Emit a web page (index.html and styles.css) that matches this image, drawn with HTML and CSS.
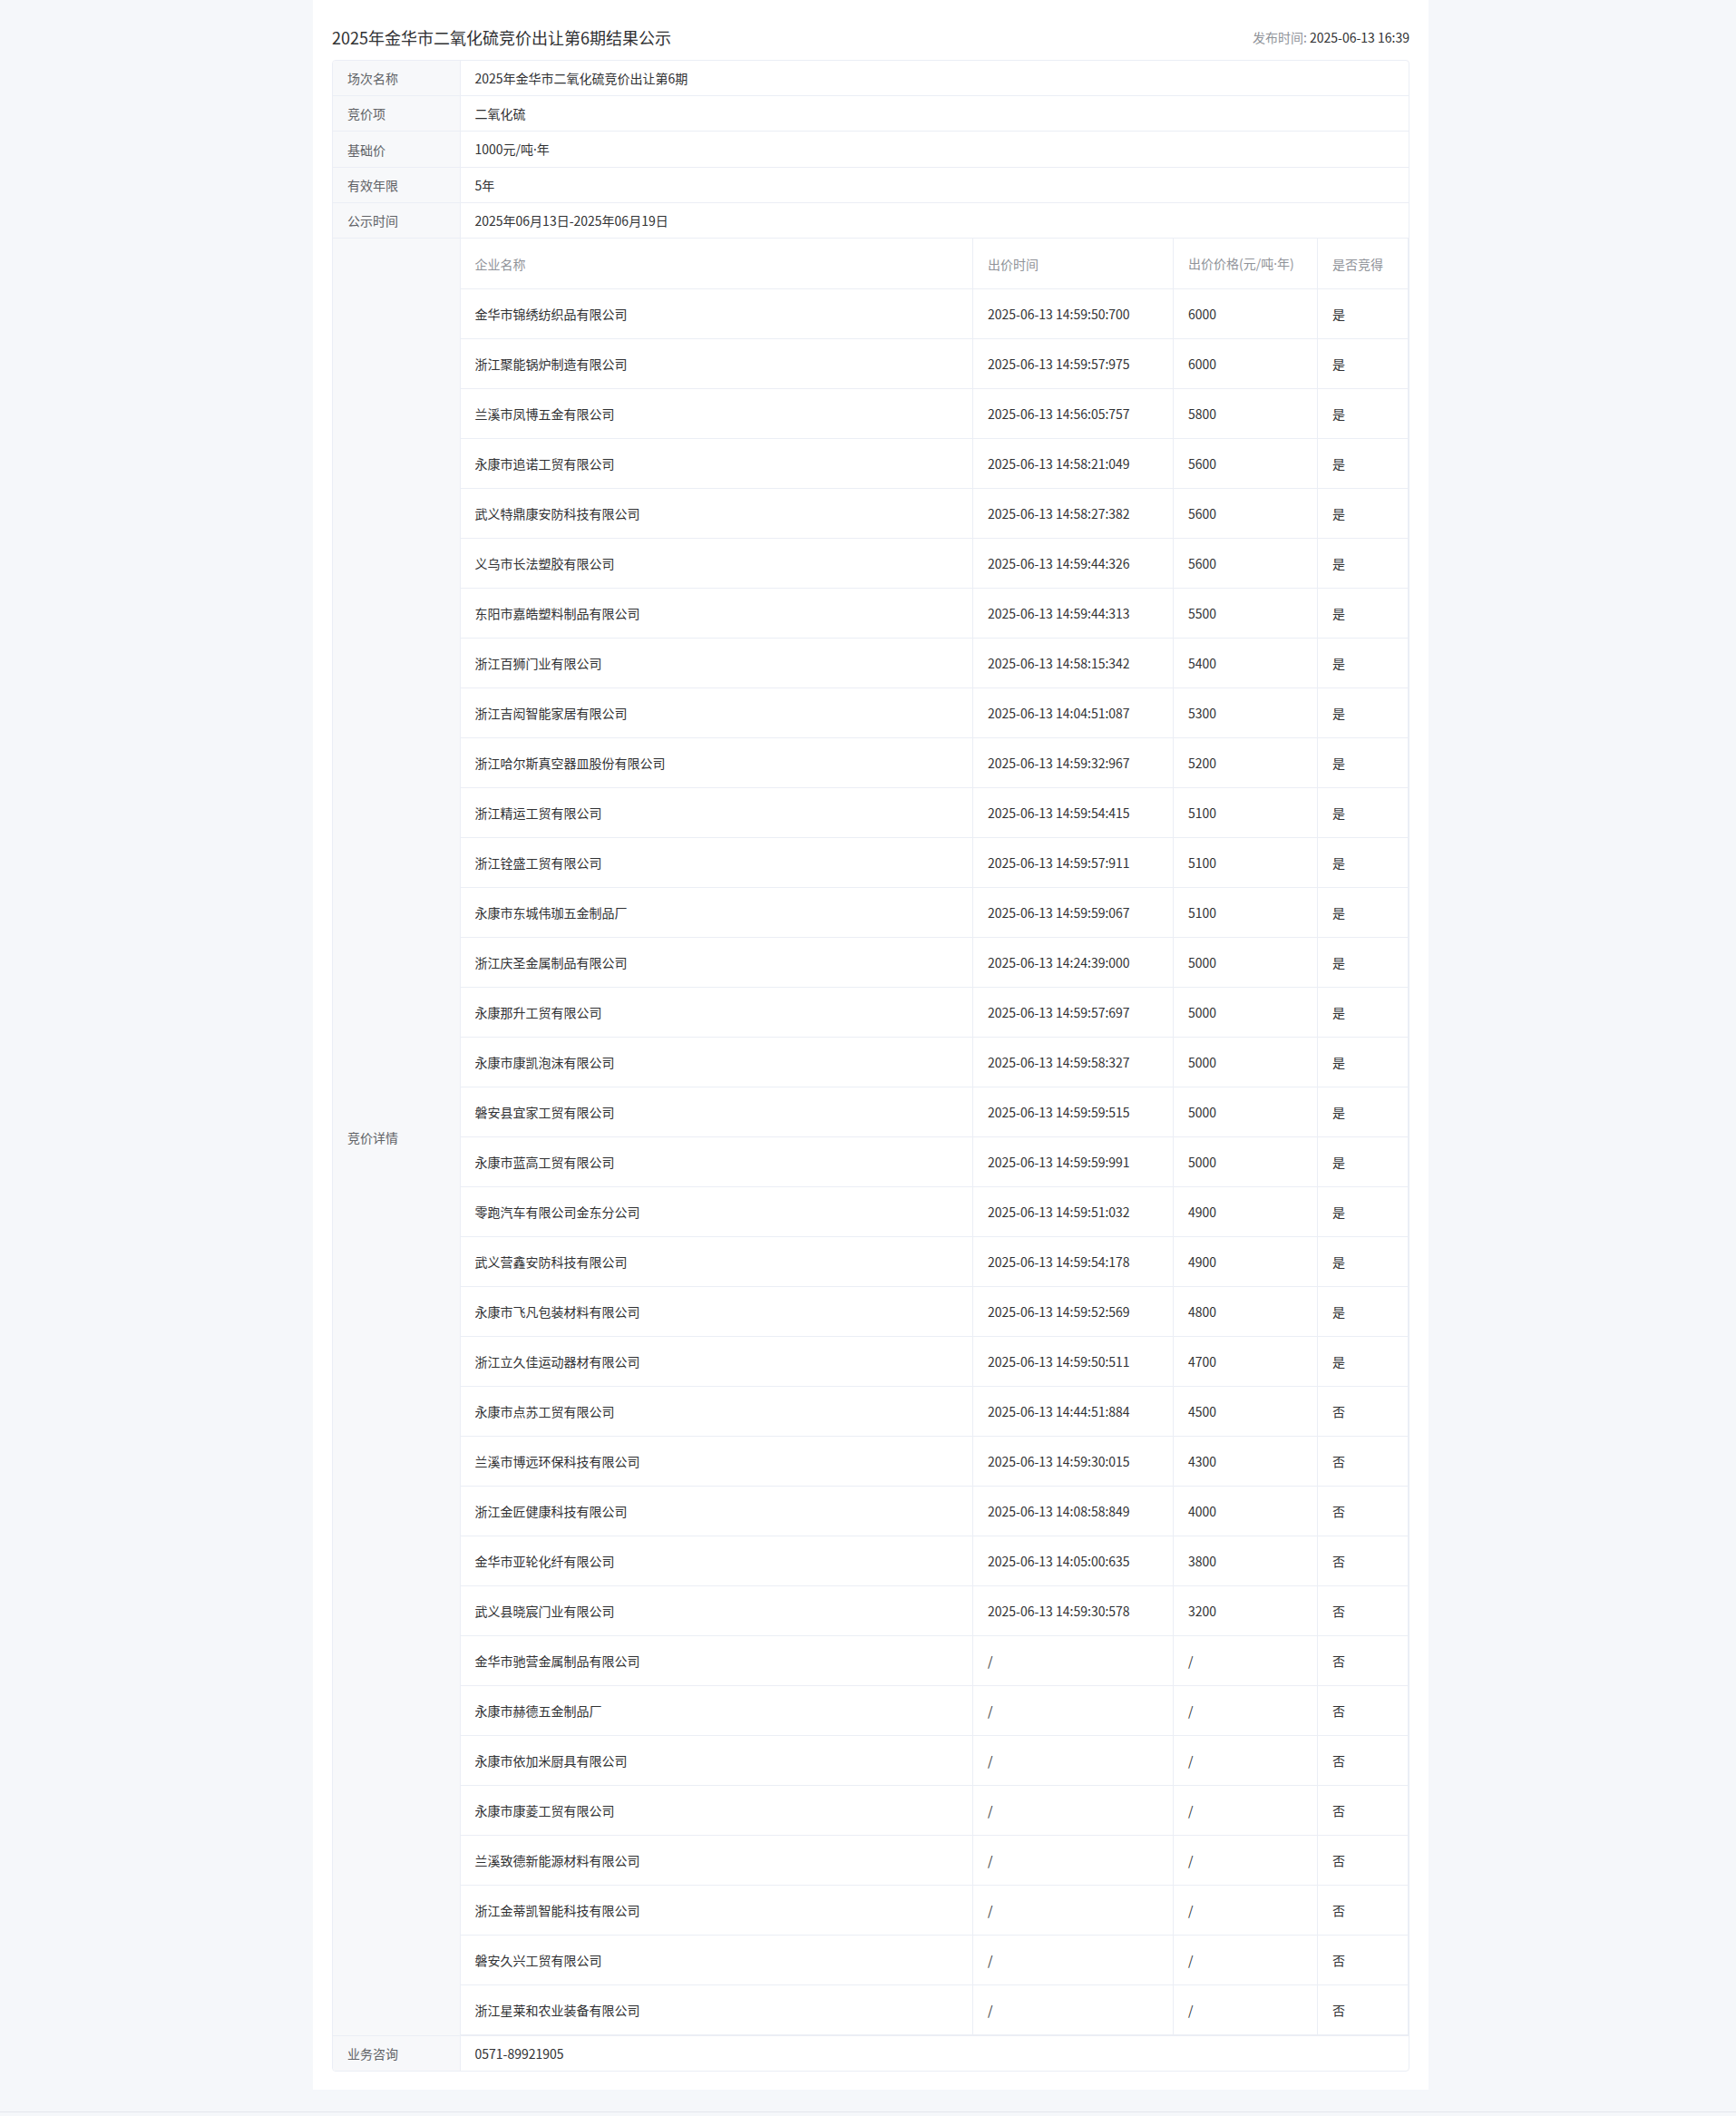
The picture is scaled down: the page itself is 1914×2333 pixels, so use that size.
FILE: index.html
```html
<!DOCTYPE html>
<html lang="zh-CN">
<head>
  <meta charset="UTF-8" />
  <title>2025年金华市二氧化硫竞价出让第6期结果公示</title>
  <link rel="stylesheet" href="styles.css">
</head>
<body>

  <div class="panel">
    <div class="head">
      <h1 class="title">2025年金华市二氧化硫竞价出让第6期结果公示</h1>
      <div class="pub-time"><span class="pub-label">发布时间:</span> 2025-06-13 16:39</div>
    </div>

    <div class="info">
      <table class="info-table">
        <colgroup>
          <col class="col-label">
          <col>
        </colgroup>
        <tr>
          <th>场次名称</th>
          <td>2025年金华市二氧化硫竞价出让第6期</td>
        </tr>
        <tr>
          <th>竞价项</th>
          <td>二氧化硫</td>
        </tr>
        <tr>
          <th>基础价</th>
          <td>1000元/吨<span class="dot">·</span>年</td>
        </tr>
        <tr>
          <th>有效年限</th>
          <td>5年</td>
        </tr>
        <tr>
          <th>公示时间</th>
          <td>2025年06月13日-2025年06月19日</td>
        </tr>
        <tr>
          <th>竞价详情</th>
          <td class="nested-cell">
            <!-- 出价明细 -->
            <table class="bid-table">
              <colgroup>
                <col>
                <col class="col-time">
                <col class="col-price">
                <col class="col-won">
              </colgroup>
              <thead>
                <tr>
                  <th>企业名称</th>
                  <th>出价时间</th>
                  <th>出价价格(元/吨<span class="dot">·</span>年)</th>
                  <th>是否竞得</th>
                </tr>
              </thead>
              <tbody id="bidRows"></tbody>
            </table>
          </td>
        </tr>
        <tr>
          <th>业务咨询</th>
          <td>0571-89921905</td>
        </tr>
      </table>
    </div>
  </div>

  <div class="footer"></div>

  <script>
    const bids = [
      ["金华市锦绣纺织品有限公司", "2025-06-13 14:59:50:700", "6000", "是"],
      ["浙江聚能锅炉制造有限公司", "2025-06-13 14:59:57:975", "6000", "是"],
      ["兰溪市凤博五金有限公司", "2025-06-13 14:56:05:757", "5800", "是"],
      ["永康市追诺工贸有限公司", "2025-06-13 14:58:21:049", "5600", "是"],
      ["武义特鼎康安防科技有限公司", "2025-06-13 14:58:27:382", "5600", "是"],
      ["义乌市长法塑胶有限公司", "2025-06-13 14:59:44:326", "5600", "是"],
      ["东阳市嘉皓塑料制品有限公司", "2025-06-13 14:59:44:313", "5500", "是"],
      ["浙江百狮门业有限公司", "2025-06-13 14:58:15:342", "5400", "是"],
      ["浙江吉闳智能家居有限公司", "2025-06-13 14:04:51:087", "5300", "是"],
      ["浙江哈尔斯真空器皿股份有限公司", "2025-06-13 14:59:32:967", "5200", "是"],
      ["浙江精运工贸有限公司", "2025-06-13 14:59:54:415", "5100", "是"],
      ["浙江铨盛工贸有限公司", "2025-06-13 14:59:57:911", "5100", "是"],
      ["永康市东城伟珈五金制品厂", "2025-06-13 14:59:59:067", "5100", "是"],
      ["浙江庆圣金属制品有限公司", "2025-06-13 14:24:39:000", "5000", "是"],
      ["永康那升工贸有限公司", "2025-06-13 14:59:57:697", "5000", "是"],
      ["永康市康凯泡沫有限公司", "2025-06-13 14:59:58:327", "5000", "是"],
      ["磐安县宜家工贸有限公司", "2025-06-13 14:59:59:515", "5000", "是"],
      ["永康市蓝高工贸有限公司", "2025-06-13 14:59:59:991", "5000", "是"],
      ["零跑汽车有限公司金东分公司", "2025-06-13 14:59:51:032", "4900", "是"],
      ["武义营鑫安防科技有限公司", "2025-06-13 14:59:54:178", "4900", "是"],
      ["永康市飞凡包装材料有限公司", "2025-06-13 14:59:52:569", "4800", "是"],
      ["浙江立久佳运动器材有限公司", "2025-06-13 14:59:50:511", "4700", "是"],
      ["永康市点苏工贸有限公司", "2025-06-13 14:44:51:884", "4500", "否"],
      ["兰溪市博远环保科技有限公司", "2025-06-13 14:59:30:015", "4300", "否"],
      ["浙江金匠健康科技有限公司", "2025-06-13 14:08:58:849", "4000", "否"],
      ["金华市亚轮化纤有限公司", "2025-06-13 14:05:00:635", "3800", "否"],
      ["武义县晓宸门业有限公司", "2025-06-13 14:59:30:578", "3200", "否"],
      ["金华市驰营金属制品有限公司", "/", "/", "否"],
      ["永康市赫德五金制品厂", "/", "/", "否"],
      ["永康市依加米厨具有限公司", "/", "/", "否"],
      ["永康市康菱工贸有限公司", "/", "/", "否"],
      ["兰溪致德新能源材料有限公司", "/", "/", "否"],
      ["浙江金蒂凯智能科技有限公司", "/", "/", "否"],
      ["磐安久兴工贸有限公司", "/", "/", "否"],
      ["浙江星莱和农业装备有限公司", "/", "/", "否"]
    ];

    const tbody = document.getElementById("bidRows");
    bids.forEach(row => {
      const tr = document.createElement("tr");
      row.forEach(text => {
        const td = document.createElement("td");
        td.textContent = text;
        tr.appendChild(td);
      });
      tbody.appendChild(tr);
    });
  </script>

</body>
</html>
```

FILE: styles.css
```css
body {
  margin: 0;
  background: #f5f7fa;
  font-family: "Microsoft YaHei", "Noto Sans CJK SC", sans-serif;
  font-size: 14px;
  color: #303133;
}

.panel {
  width: 1230px;
  margin-left: 345px;
  padding: 0 21px 20px;
  box-sizing: border-box;
  background: #fff;
}

.head {
  display: flex;
  align-items: center;
  justify-content: space-between;
  height: 50px;
  padding-top: 16px;
}

.title {
  margin: 0;
  font-size: 18px;
  font-weight: normal;
  color: #303133;
}

.pub-time {
  color: #303133;
}

.pub-label {
  color: #909399;
}

/* 中点用西文字体，避免全角 */
.dot {
  font-family: "Noto Sans", sans-serif;
}

.info {
  border: 1px solid #ebeef5;
  border-radius: 4px;
  overflow: hidden;
}

.info-table {
  width: 100%;
  border-collapse: collapse;
  table-layout: fixed;
}

.col-label {
  width: 140px;
}

.info-table > tbody > tr > th,
.info-table > tbody > tr > td {
  padding: 9px 16px;
  line-height: 20px;
  text-align: left;
  font-weight: normal;
  border-bottom: 1px solid #ebeef5;
}

.info-table > tbody > tr:last-child > th,
.info-table > tbody > tr:last-child > td {
  border-bottom: none;
}

.info-table > tbody > tr > th {
  background: #f7f8fa;
  color: #606266;
  border-right: 1px solid #ebeef5;
  vertical-align: middle;
}

.info-table > tbody > tr > td.nested-cell {
  padding: 0;
}

.bid-table {
  width: 100%;
  border-collapse: collapse;
  table-layout: fixed;
}

.col-time {
  width: 221px;
}

.col-price {
  width: 159px;
}

.col-won {
  width: 100px;
}

.bid-table th,
.bid-table td {
  padding: 17px 12px 17px 16px;
  line-height: 20px;
  text-align: left;
  font-weight: normal;
  white-space: nowrap;
  border-bottom: 1px solid #ebeef5;
  border-right: 1px solid #ebeef5;
}

.bid-table th {
  color: #909399;
}

.bid-table td {
  color: #303133;
}

.footer {
  margin-top: 24px;
  height: 40px;
  border-top: 1px solid #e4e7ed;
  background: #f5f7fa;
}
```
